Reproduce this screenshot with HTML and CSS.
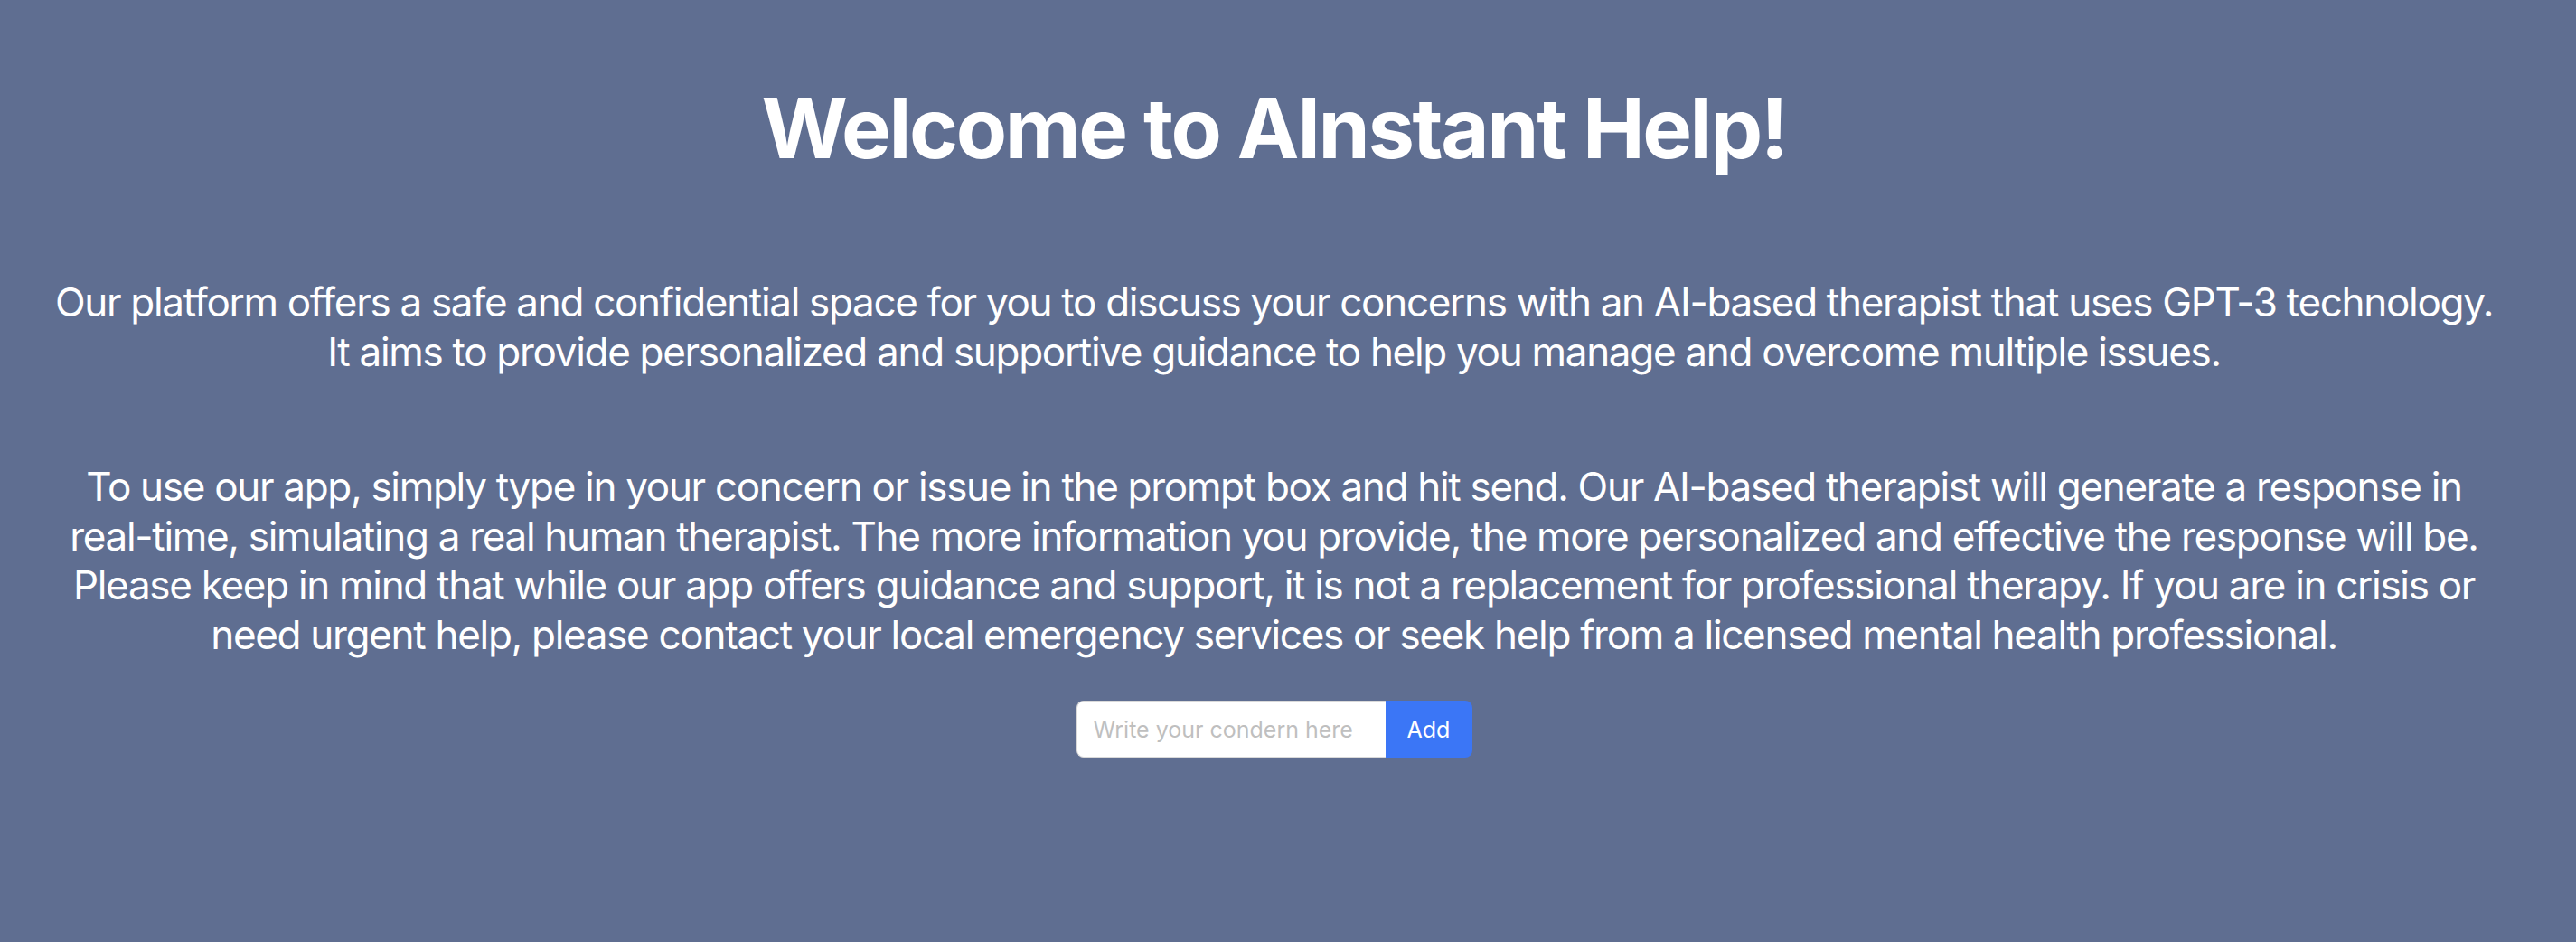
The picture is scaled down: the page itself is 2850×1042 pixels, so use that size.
FILE: index.html
```html
<!DOCTYPE html>
<html lang="en">
<head>
<meta charset="utf-8">
<title>AInstant Help</title>
<link rel="stylesheet" href="styles.css">
</head>
<body>
<main class="page">
  <h1 class="title">Welcome to AInstant Help!</h1>
  <p class="intro">Our platform offers a safe and confidential space for you to discuss your concerns with an AI-based therapist that uses GPT-3 technology. It aims to provide personalized and supportive guidance to help you manage and overcome multiple issues.</p>
  <p class="howto">To use our app, simply type in your concern or issue in the prompt box and hit send. Our AI-based therapist will generate a response in <span class="nowrap">real-time,</span> simulating a real human therapist. The more information you provide, the more personalized and effective the response will be. Please keep in mind that while our app offers guidance and support, it is not a replacement for professional therapy. If you are in crisis or need urgent help, please contact your local emergency services or seek help from a licensed mental health professional.</p>
  <form class="prompt" onsubmit="return false;">
    <input class="prompt-input" type="text" placeholder="Write your condern here">
    <button class="prompt-btn" type="submit">Add</button>
  </form>
</main>
</body>
</html>
```

FILE: styles.css
```css
html, body {
  margin: 0;
  padding: 0;
}
body {
  background: #5f6e91;
  color: #ffffff;
  font-family: Inter, "Noto Sans", sans-serif;
  min-height: 100vh;
}
.page {
  display: flex;
  flex-direction: column;
  align-items: center;
  padding: 87px 83px 0 52px;
  text-align: center;
}
.title {
  margin: 0;
  font-size: 92px;
  line-height: 110px;
  font-weight: 700;
  letter-spacing: -2.4px;
}
.intro, .howto {
  margin: 0;
  font-size: 44px;
  line-height: 54.5px;
  font-weight: 400;
  letter-spacing: -1.3px;
}
.nowrap {
  white-space: nowrap;
}
.intro {
  margin-top: 110px;
}
.howto {
  margin-top: 95px;
}
.prompt {
  display: flex;
  margin-top: 46px;
}
.prompt-input {
  width: 342px;
  height: 63px;
  box-sizing: border-box;
  border: 1px solid #d9d9d9;
  border-right: none;
  border-radius: 8px 0 0 8px;
  padding: 0 18px;
  font-family: Inter, sans-serif;
  font-size: 25px;
  color: #333;
  background: #fff;
  outline: none;
}
.prompt-input::placeholder {
  color: #bfbfbf;
}
.prompt-btn {
  width: 96px;
  height: 63px;
  border: none;
  border-radius: 0 8px 8px 0;
  background: #3b76f6;
  color: #fff;
  font-family: Inter, sans-serif;
  font-size: 25px;
  padding: 0;
  cursor: pointer;
}
```
